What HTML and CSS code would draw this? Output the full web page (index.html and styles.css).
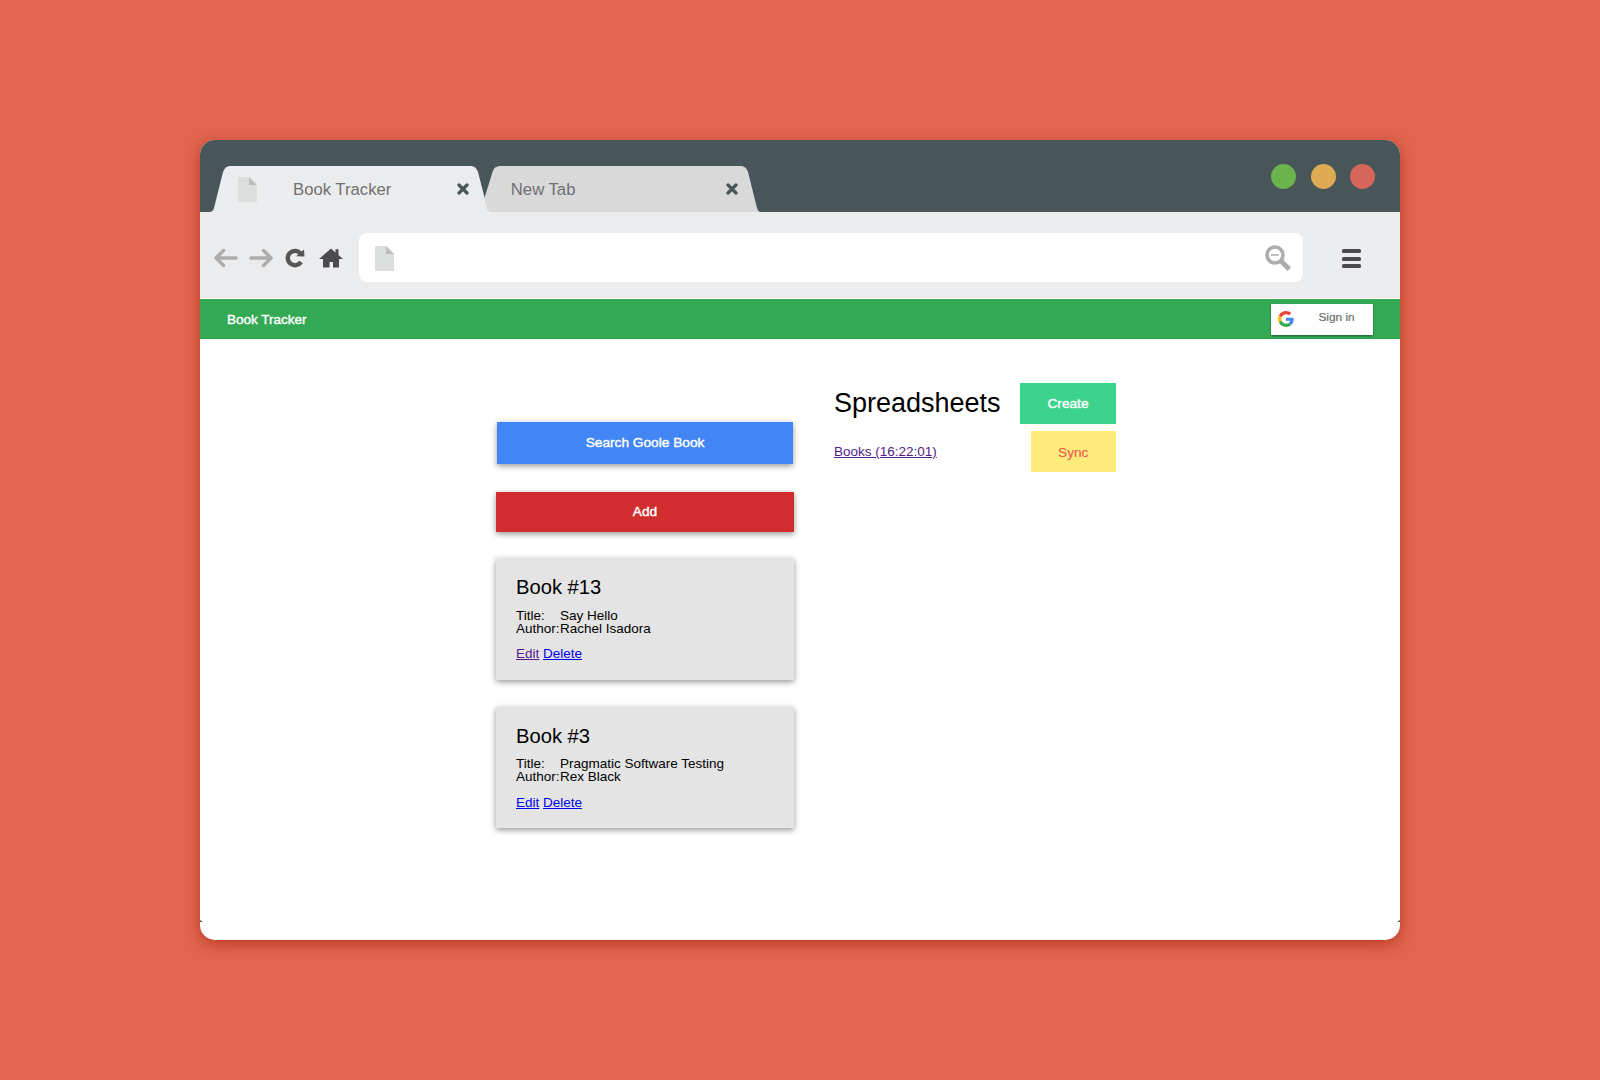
FILE: index.html
```html
<!DOCTYPE html>
<html lang="en">
<head>
<meta charset="utf-8">
<title>Book Tracker</title>
<link rel="stylesheet" href="styles.css">
</head>
<body>
<div class="window">
  <div class="tabbar">
    <div class="tab tab-active">
      <svg class="tab-shape" width="279" height="46" viewBox="0 0 279 46"><path fill="#ebeced" d="M0 46Q3 45.500 4 42L13 6Q15 0 20 0H261Q266 0 268 6L277.500 43Q278.500 45.500 280 46Z"/></svg>
      <div class="tab-content">
        <svg class="doc" width="19" height="25" viewBox="0 0 19 25"><path fill="#dcdddd" d="M0 0H11L19 8V25H0Z"/><path fill="#bcbdbd" d="M11 0L19 8H11Z"/></svg>
        <span class="tab-label">Book Tracker</span>
        <svg class="close" width="12" height="12" viewBox="0 0 12 12"><path d="M2 2L10 10M10 2L2 10"/></svg>
      </div>
    </div>
    <div class="tab tab-new">
      <svg class="tab-shape" width="279" height="46" viewBox="0 0 279 46"><path fill="#d9d9da" d="M7 46L6 42L3.500 32L11.500 6Q13 0 19 0H260Q265 0 267 6L276 42Q277 46 280 46Z"/></svg>
      <div class="tab-content">
        <span class="tab-label">New Tab</span>
        <svg class="close" width="12" height="12" viewBox="0 0 12 12"><path d="M2 2L10 10M10 2L2 10"/></svg>
      </div>
    </div>
    <div class="dots"><i class="dot green"></i><i class="dot amber"></i><i class="dot red"></i></div>
  </div>
  <div class="toolbar">
    <div class="nav">
      <svg width="24" height="20" viewBox="0 0 24 20"><path class="arrow" d="M22 10H2M9.500 2.500L2 10L9.500 17.500"/></svg>
      <svg width="24" height="20" viewBox="0 0 24 20"><path class="arrow" d="M2 10H22M14.500 2.500L22 10L14.500 17.500"/></svg>
      <svg class="reload" width="20" height="20" viewBox="0 0 20 20"><path fill="none" stroke="#555556" stroke-width="4.400" d="M16 14A7.200 7.200 0 1 1 15.500 5.400"/><path fill="#555556" d="M19 1.500L19.500 8.600L11 8.200Z"/></svg>
      <svg class="home" width="24" height="20" viewBox="0 0 24 20"><path fill="#4b4b4d" d="M12 .5L16.500 4.500V1.200H19.500V7L24 11H20V19.500H14V14H10.500V19.500H4V11H0Z"/></svg>
    </div>
    <div class="address">
      <svg width="19" height="25" viewBox="0 0 19 25"><path fill="#dcdddd" d="M0 0H11L19 8V25H0Z"/><path fill="#bcbdbd" d="M11 0L19 8H11Z"/></svg>
      <svg width="27" height="27" viewBox="0 0 27 27"><g fill="none" stroke="#adadad"><circle cx="10" cy="10" r="8" stroke-width="3.600"/><path stroke-width="1.500" d="M6 10H14"/><path stroke-width="5" d="M15.500 15.500L24.300 24.300"/></g></svg>
    </div>
    <div class="menu"><i></i><i></i><i></i></div>
  </div>
  <header class="header">
    <span class="brand">Book Tracker</span>
    <div class="signin">
      <svg width="16" height="16" viewBox="0 0 48 48"><path fill="#ea4335" d="M24 9.500c3.540 0 6.710 1.220 9.210 3.600l6.850-6.850C35.900 2.380 30.470 0 24 0 14.620 0 6.510 5.380 2.560 13.220l7.980 6.190C12.430 13.720 17.740 9.500 24 9.500z"/><path fill="#4285f4" d="M46.980 24.550c0-1.570-.15-3.090-.38-4.550H24v9.020h12.940c-.58 2.960-2.260 5.480-4.780 7.180l7.730 6c4.510-4.180 7.090-10.360 7.090-17.650z"/><path fill="#fbbc05" d="M10.530 28.590c-.48-1.450-.76-2.990-.76-4.590s.27-3.140.76-4.590l-7.980-6.190C.92 16.460 0 20.120 0 24c0 3.880.92 7.540 2.560 10.780l7.970-6.190z"/><path fill="#34a853" d="M24 48c6.480 0 11.930-2.130 15.890-5.810l-7.730-6c-2.150 1.450-4.920 2.300-8.160 2.300-6.260 0-11.570-4.220-13.470-9.910l-7.980 6.190C6.510 42.620 14.620 48 24 48z"/></svg>
      <span>Sign in</span>
    </div>
  </header>
  <main class="page">
    <section class="books">
      <div class="btn search">Search Goole Book</div>
      <div class="btn add">Add</div>
      <article class="card">
        <h2>Book #13</h2>
        <dl><dt>Title:</dt><dd>Say Hello</dd><dt>Author:</dt><dd>Rachel Isadora</dd></dl>
        <p><a class="visited" href="#">Edit</a> <a href="#">Delete</a></p>
      </article>
      <article class="card card-second">
        <h2>Book #3</h2>
        <dl><dt>Title:</dt><dd>Pragmatic Software Testing</dd><dt>Author:</dt><dd>Rex Black</dd></dl>
        <p><a href="#">Edit</a> <a href="#">Delete</a></p>
      </article>
    </section>
    <section class="sheets">
      <div class="row"><h1>Spreadsheets</h1><div class="btn create">Create</div></div>
      <div class="row"><a class="visited" href="#">Books (16:22:01)</a><div class="btn sync">Sync</div></div>
    </section>
  </main>
  <i class="nick nick-left"></i><i class="nick nick-right"></i>
</div>
</body>
</html>
```
FILE: styles.css
```css
* { box-sizing: border-box; }
body {
  margin: 0;
  height: 1080px;
  padding: 140px 200px;
  background: #e06650;
  font-family: "Liberation Sans", Arial, sans-serif;
  font-size: 13.500px;
  color: #000;
  overflow: hidden;
}
svg { display: block; flex: none; }
h1, h2, p, dl, dd { margin: 0; font-weight: 400; }
.window {
  position: relative;
  width: 1200px;
  height: 800px;
  border-radius: 15px;
  background: #fff;
  box-shadow: 0 4px 14px rgba(165, 35, 10, .65);
}
.tabbar {
  display: flex;
  height: 72px;
  padding: 26px 25px 0 10px;
  background: #485559;
  border-radius: 15px 15px 0 0;
}
.tab { display: grid; width: 279px; height: 46px; }
.tab > * { grid-area: 1 / 1; }
.tab-shape { overflow: visible; }
.tab-active { z-index: 1; }
.tab-new { margin-left: -8px; }
.tab-content {
  z-index: 1;
  display: flex;
  align-items: center;
  padding: 0 20.500px 0 28px;
  color: #707070;
  font-size: 16.700px;
}
.tab-label { padding-top: 2px; }
.tab-new .tab-content { padding: 0 22.500px 0 29.800px; }
.doc { margin-right: 36px; }
.close { margin-left: auto; fill: none; stroke: #485559; stroke-width: 3.200; stroke-linecap: round; }
.dots { display: flex; gap: 14.500px; margin: -2px 0 0 auto; }
.dot { width: 25px; height: 25px; border-radius: 50%; }
.green { background: #6bb34c; }
.amber { background: #dfab52; }
.red { background: #d6655a; }
.toolbar {
  display: flex;
  align-items: center;
  height: 86px;
  padding: 5px 39px 0 14px;
  background: #ebeced;
}
.nav { display: flex; gap: 10.700px; width: 145px; padding-top: 1px; }
.reload { margin-left: 2px; }
.home { margin-left: 3px; }
.arrow { fill: none; stroke: #adadad; stroke-width: 3.500; stroke-linecap: round; stroke-linejoin: round; }
.address {
  display: flex;
  align-items: center;
  justify-content: space-between;
  width: 944px;
  height: 49px;
  padding: 2px 11px 0 16px;
  background: #fff;
  border-radius: 8px;
}
.menu { display: grid; gap: 3.500px; width: 19px; margin: 2px 0 0 auto; }
.menu i { height: 4px; border-radius: 1.500px; background: #4b4b4d; }
.header {
  display: flex;
  align-items: center;
  justify-content: space-between;
  height: 40px;
  margin-top: 1px;
  padding: 1px 27px 0;
  background: #34a953;
  border-bottom: 1px solid #2aa04a;
  color: #fff;
}
.brand { padding-top: 1px; -webkit-text-stroke: .4px #fff; }
.signin {
  display: flex;
  align-items: center;
  width: 102px;
  height: 31px;
  padding: 0 7px;
  background: #fff;
  box-shadow: 0 1px 2px rgba(0, 0, 0, .45);
  color: #6c6c6c;
  font-size: 11.800px;
}
.signin span { margin: -4px 0 0 24.500px; -webkit-text-stroke: .2px #6c6c6c; }
.page { display: flex; gap: 40px; padding-left: 296px; }
.books { width: 298px; padding-top: 82.500px; }
.btn {
  display: flex;
  align-items: center;
  justify-content: center;
  color: #fff;
  font-size: 13.700px;
  -webkit-text-stroke: .4px currentColor;
}
.search {
  height: 42px;
  margin: 0 1px 28px;
  background: #4285f4;
}
.add { height: 40px; margin-bottom: 26.500px; padding-bottom: 1px; background: #d12d2e; }
.search, .add, .card { box-shadow: 0 2px 6px rgba(0, 0, 0, .42); }
.card {
  height: 122px;
  margin-bottom: 27px;
  padding: 17px 20px;
  background: #e4e4e4;
}
.card-second { height: 121px; }
h2 { font-size: 20.200px; line-height: 24px; }
dl {
  display: grid;
  grid-template-columns: 44px 1fr;
  margin-top: 10px;
  line-height: 13px;
  white-space: nowrap;
}
p { margin-top: 11px; line-height: 16px; }
.card-second dl { margin-top: 9px; }
.card-second p { margin-top: 12px; }
a { color: #0000ee; }
.visited { color: #551a8b; }
.sheets { width: 282px; padding-top: 44px; }
.row { display: flex; align-items: center; justify-content: space-between; height: 41px; margin-bottom: 7px; }
h1 { font-size: 27px; }
.create { width: 96px; height: 41px; background: #3bd38c; }
.sync {
  width: 85.500px;
  height: 41px;
  padding-top: 1px;
  background: #fdec7b;
  color: #f05a50;
  -webkit-text-stroke: .15px currentColor;
}
.nick { position: absolute; top: 780px; border-bottom: 2px solid #485559; }
.nick-left { left: 0; border-right: 3px solid transparent; }
.nick-right { right: 0; border-left: 3px solid transparent; }
```
